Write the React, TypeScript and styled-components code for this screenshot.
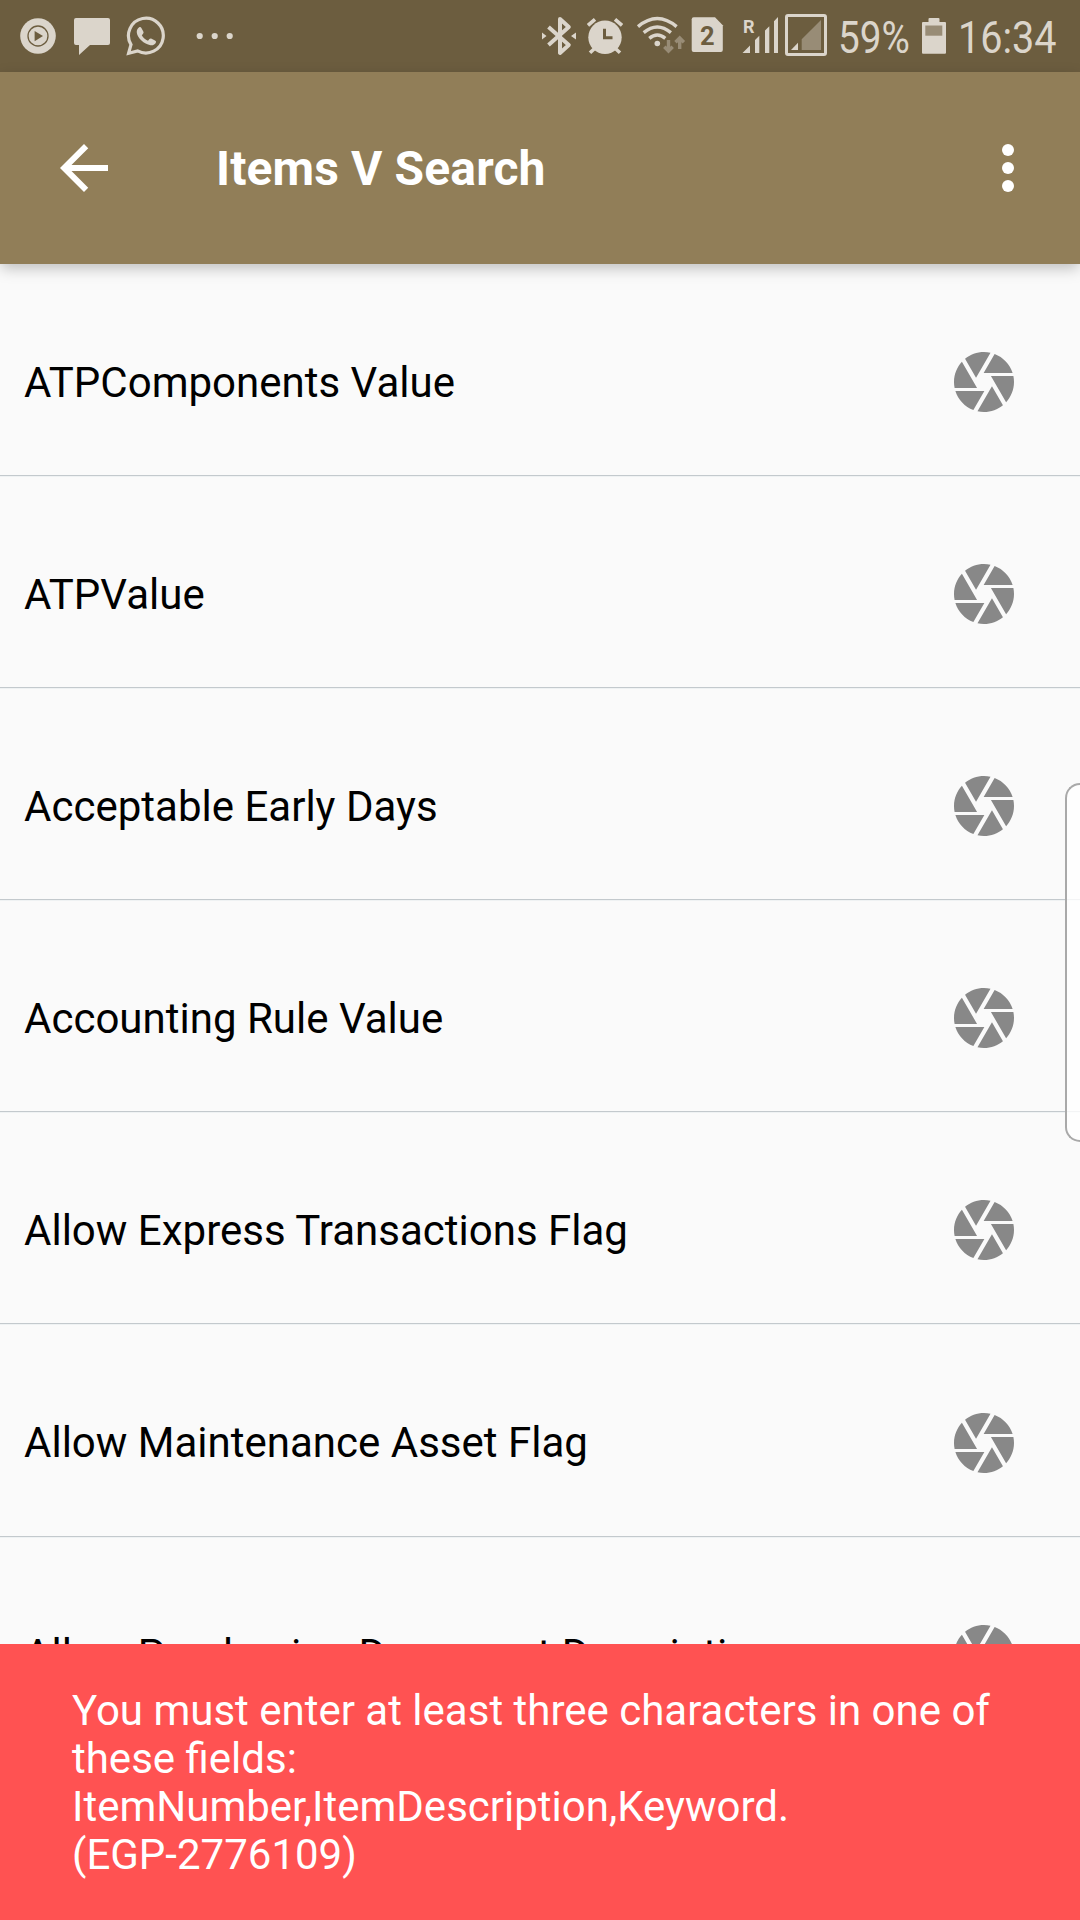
import React from 'react';
import styled, { createGlobalStyle } from 'styled-components';

const STATUS_FG = '#dbd5cb';
const STATUS_DIM = '#988c76';
const STATUS_BG = '#6c5d3f';

const GlobalStyle = createGlobalStyle`
  body {
    margin: 0;
    background: #fafafa;
    font-family: Roboto, "Noto Sans", sans-serif;
  }
`;

const Screen = styled.div`
  position: relative;
  display: flex;
  flex-direction: column;
  width: 1080px;
  height: 1920px;
  overflow: hidden;
  background: #fafafa;
`;

const StatusBar = styled.div`
  flex: none;
  display: flex;
  justify-content: space-between;
  height: 72px;
  padding: 0 21px 0 20px;
  box-sizing: border-box;
  background: ${STATUS_BG};
`;

const StatusGroup = styled.div`
  display: flex;
  align-items: center;
`;

const StatusIcon = styled.svg<{ $gap?: number }>`
  flex: none;
  display: block;
  margin-left: ${(p) => p.$gap ?? 0}px;
  height: 72px;
  font-family: Roboto, sans-serif;
  font-weight: 700;
`;

const StatusText = styled.span<{ $width: number; $gap: number; $scale: number }>`
  flex: none;
  width: ${(p) => p.$width}px;
  margin-left: ${(p) => p.$gap}px;
  padding-top: 3px;
  font-size: 45px;
  line-height: 72px;
  white-space: nowrap;
  color: ${STATUS_FG};
  transform: scaleX(${(p) => p.$scale});
  transform-origin: left center;
`;

const AppBar = styled.header`
  flex: none;
  z-index: 1;
  display: flex;
  align-items: center;
  height: 192px;
  padding: 0 36px 0 48px;
  box-sizing: border-box;
  background: #917e58;
  box-shadow: 0 5px 14px -1px rgba(0, 0, 0, 0.25);
`;

const BarButton = styled.button`
  width: 72px;
  height: 72px;
  padding: 0;
  border: 0;
  background: none;
  color: #fff;
`;

const Glyph = styled.svg`
  display: block;
  width: 72px;
  height: 72px;
  fill: currentColor;
`;

const Title = styled.h1`
  flex: 1;
  margin: 0 0 0 96px;
  padding-top: 2px;
  font-size: 48px;
  line-height: 60px;
  font-weight: 700;
  letter-spacing: 0.12px;
  color: #fff;
`;

const List = styled.ul`
  flex: 1;
  min-height: 0;
  margin: 0;
  padding: 0;
  overflow: hidden;
  list-style: none;
`;

const Row = styled.li`
  display: flex;
  align-items: flex-start;
  justify-content: space-between;
  height: 212.1px;
  padding: 82.1px 60px 0 24px;
  box-sizing: border-box;
  border-bottom: 1px solid #c3c9cd;
  box-shadow: 0 1px 0 #eff2f3;
`;

const Label = styled.span`
  padding-top: 11.6px;
  font-size: 42px;
  line-height: 50px;
  letter-spacing: 0.01px;
  color: #000;
`;

const RowIcon = styled.span`
  color: #888;
`;

const Toast = styled.div`
  flex: none;
  height: 276px;
  padding: 43px 72px 0;
  box-sizing: border-box;
  background: #ff5252;
  font-size: 42px;
  line-height: 48px;
  color: #fff;
  white-space: pre-line;
`;

const EdgeHandle = styled.div`
  position: absolute;
  z-index: 2;
  top: 783px;
  right: 0;
  width: 15px;
  height: 359px;
  box-sizing: border-box;
  border: 2px solid #a9a9a9;
  border-right: 0;
  border-radius: 18px 0 0 18px / 18px 0 0 18px;
  background: rgba(255, 255, 255, 0.8);
`;

const items = [
  'ATPComponents Value',
  'ATPValue',
  'Acceptable Early Days',
  'Accounting Rule Value',
  'Allow Express Transactions Flag',
  'Allow Maintenance Asset Flag',
  'Allow Purchasing Document Description',
];

const message =
  'You must enter at least three characters in one of these fields:\nItemNumber,ItemDescription,Keyword.\n(EGP-2776109)';

const NotificationIcons = () => (
  <StatusGroup>
    <StatusIcon width={36} viewBox="20 0 36 72" fill={STATUS_FG}>
      <circle cx="38" cy="36" r="17.8" />
      <circle cx="38" cy="36" r="10" fill="none" stroke={STATUS_BG} strokeWidth="1.3" />
      <path d="M34.6 31v10.2L43 36z" fill={STATUS_BG} />
    </StatusIcon>
    <StatusIcon $gap={18} width={36} viewBox="74 0 36 72" fill={STATUS_FG}>
      <path d="M76 18h32a2 2 0 0 1 2 2v23a2 2 0 0 1-2 2H90L79 55V45h-3a2 2 0 0 1-2-2V20a2 2 0 0 1 2-2z" />
    </StatusIcon>
    <StatusIcon $gap={16} width={40} viewBox="126 0 40 72" fill={STATUS_FG}>
      <path
        d="M128.6 53.2l2.4-8.6a17.4 17.4 0 1 1 6.6 6.3z"
        fill="none"
        stroke={STATUS_FG}
        strokeWidth="3.2"
      />
      <path d="M139.2 27.3c.8-.6 1.6-.4 2.2.6l1.9 3.7c.5 1 .3 1.7-.4 2.4l-1.1 1.3c1.3 2.5 3.5 4.5 6.2 5.5l1.4-1.7c.6-.7 1.3-.9 2.2-.4l3.4 1.7c1 .5 1.2 1.1.9 2-.8 2.1-3 3.1-5.4 2.8-6.5-.9-13-7.2-13.7-12.4-.3-2.3.7-4.4 2.4-5.5z" />
    </StatusIcon>
    <StatusIcon $gap={30} width={37} viewBox="196 0 37 72" fill={STATUS_FG}>
      <circle cx="199.7" cy="36" r="3.1" />
      <circle cx="214.7" cy="36" r="3.1" />
      <circle cx="229.7" cy="36" r="3.1" />
    </StatusIcon>
  </StatusGroup>
);

const SystemIcons = () => (
  <StatusGroup>
    <StatusIcon width={36} viewBox="541 0 36 72" fill={STATUS_FG}>
      <path
        d="M548.5 27l20.3 18-8.8 8V19l8.8 8-20.3 18"
        fill="none"
        stroke={STATUS_FG}
        strokeWidth="4"
        strokeLinejoin="round"
      />
      <path d="M542 32.5v7l4.5-3.5zM576 32.5v7l-5-3.5z" />
    </StatusIcon>
    <StatusIcon $gap={10} width={36} viewBox="587 0 36 72" fill={STATUS_FG}>
      <circle cx="605" cy="37.3" r="16.7" />
      <path
        d="M588 25.3l7-6M615 19.3l7 6M590 52.8l6.5-6M620 52.8l-6.5-6"
        stroke={STATUS_FG}
        strokeWidth="3.6"
      />
      <path d="M604.5 28.8v9h8" fill="none" stroke={STATUS_BG} strokeWidth="3" />
    </StatusIcon>
    <StatusIcon $gap={13} width={50} viewBox="636 0 50 72" fill={STATUS_FG}>
      <g fill="none" stroke={STATUS_FG} strokeWidth="3.4">
        <path d="M638 26.6q19.3-16.2 38.6 0" />
        <path d="M643.7 32.6q13.6-11.4 27.2 0" />
        <path d="M649.3 38.4q8-6.6 16 0" />
      </g>
      <circle cx="657.3" cy="43.5" r="2.8" />
      <path
        d="M668.5 40v11M664.3 46.8l4.2 4.2 4.2-4.2M679.7 49V38M675.5 42.2l4.2-4.2 4.2 4.2"
        fill="none"
        stroke={STATUS_DIM}
        strokeWidth="3.4"
      />
    </StatusIcon>
    <StatusIcon $gap={5} width={33} viewBox="691 0 33 72" fill={STATUS_FG}>
      <path d="M693.7 17.3h21.3l7.8 8V50a2 2 0 0 1-2 2h-27.1a2 2 0 0 1-2-2V19.3a2 2 0 0 1 2-2z" />
      <text x="707.2" y="45" textAnchor="middle" fontSize="25.5" fill={STATUS_BG}>
        2
      </text>
    </StatusIcon>
    <StatusIcon $gap={17} width={38} viewBox="741 0 38 72" fill={STATUS_FG}>
      <text x="743" y="32.7" fontSize="18">
        R
      </text>
      <path d="M742.5 53h7.5v-7.5zM755 53V40l4.3-4.3V53zM765 53V30.5l4.3-4.3V53zM774 53V21.3l4-4.3v36z" />
    </StatusIcon>
    <StatusIcon $gap={6} width={42} viewBox="785 0 42 72" fill={STATUS_FG}>
      <rect
        x="786.5"
        y="15.5"
        width="39"
        height="39"
        rx="1.5"
        fill="none"
        stroke={STATUS_FG}
        strokeWidth="3"
      />
      <path d="M791 50h7v-7.2z" />
      <path d="M801.7 50V39.3L821 20v30z" fill={STATUS_DIM} />
    </StatusIcon>
    <StatusText $gap={11} $width={73} $scale={0.86}>
      59%
    </StatusText>
    <StatusIcon $gap={11} width={24} viewBox="922 0 24 72" fill={STATUS_FG}>
      <path d="M928.5 22v-3a1 1 0 0 1 1-1h9a1 1 0 0 1 1 1v3h5.5a1 1 0 0 1 1 1v29.8a1 1 0 0 1-1 1h-22a1 1 0 0 1-1-1V23a1 1 0 0 1 1-1z" />
      <path d="M925.3 25.5h17V35.7h-17z" fill={STATUS_DIM} />
    </StatusIcon>
    <StatusText $gap={12} $width={101} $scale={0.88}>
      16:34
    </StatusText>
  </StatusGroup>
);

const ApertureIcon = () => (
  <Glyph viewBox="0 0 24 24">
    <path d="M9.4 10.5l4.77-8.26C13.47 2.09 12.75 2 12 2c-2.4 0-4.6.85-6.32 2.25l3.66 6.35.06-.1zM21.54 9c-.92-2.92-3.15-5.26-6-6.34L11.88 9h9.66zm.26 1h-7.49l.29.5 4.76 8.25C20.97 16.97 22 14.61 22 12c0-.69-.07-1.35-.2-2zM8.54 12l-3.9-6.75C3.01 7.03 2 9.39 2 12c0 .69.07 1.35.2 2h7.49l-1.15-2zm-6.08 3c.92 2.92 3.15 5.26 6 6.34L12.12 15H2.46zm11.27 0l-3.9 6.76c.7.15 1.42.24 2.17.24 2.4 0 4.6-.85 6.32-2.25l-3.66-6.35-.93 1.6z" />
  </Glyph>
);

export default function App() {
  return (
    <Screen>
      <GlobalStyle />
      <StatusBar>
        <NotificationIcons />
        <SystemIcons />
      </StatusBar>
      <AppBar>
        <BarButton aria-label="Back">
          <Glyph viewBox="0 0 24 24">
            <path d="M20 11H7.83l5.59-5.59L12 4l-8 8 8 8 1.41-1.41L7.83 13H20v-2z" />
          </Glyph>
        </BarButton>
        <Title>Items V Search</Title>
        <BarButton aria-label="More options">
          <Glyph viewBox="0 0 24 24">
            <circle cx="12" cy="6" r="2" />
            <circle cx="12" cy="12" r="2" />
            <circle cx="12" cy="18" r="2" />
          </Glyph>
        </BarButton>
      </AppBar>
      <List>
        {items.map((item) => (
          <Row key={item}>
            <Label>{item}</Label>
            <RowIcon>
              <ApertureIcon />
            </RowIcon>
          </Row>
        ))}
      </List>
      <Toast role="alert">{message}</Toast>
      <EdgeHandle />
    </Screen>
  );
}
